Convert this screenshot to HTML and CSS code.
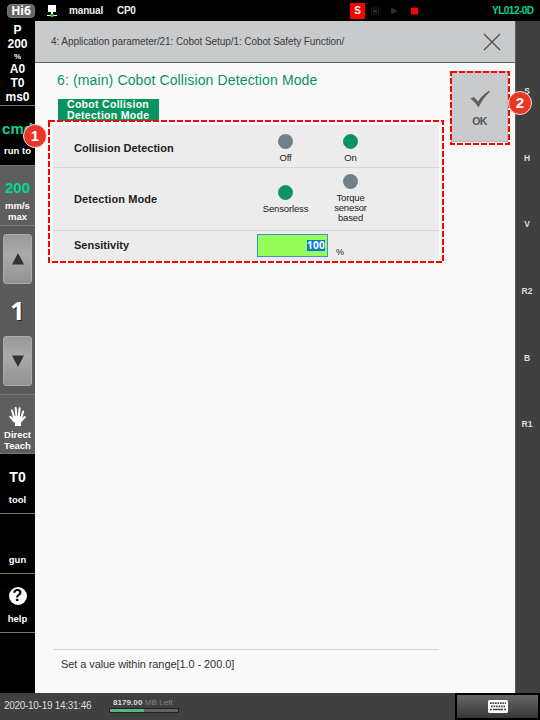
FILE: index.html
```html
<!DOCTYPE html>
<html lang="en">
<head>
<meta charset="utf-8">
<title>Cobot Collision Detection Mode</title>
<link rel="stylesheet" href="styles.css">
</head>
<body>
<div class="app">
  <header class="topbar">
    <span class="logo">Hi6</span>
    <svg class="net" width="10" height="12" viewBox="0 0 10 12"><path fill="#fff" d="M1 0h8v7H1zM4 7h2v3H4zM0 10h10v1H0z"/><path fill="#00e000" d="M3.500 9h3v3h-3z"/></svg>
    <b class="mode">manual</b><b class="cp">CP0</b>
    <span class="servo">S</span>
    <svg class="states" width="52" height="10" viewBox="0 0 52 10"><path fill="none" stroke="#142414" d="M.5 2h7v6h-7z"/><path fill="#203520" d="M2 3.5h4v3H2z"/><path fill="#303030" d="M20 1.500l7 3.500-7 3.500z"/><path fill="#f00" d="M40 1.500h7v7h-7z"/></svg>
    <b class="model">YL012-0D</b>
  </header>
  <div class="middle">
    <nav class="side">
      <section class="status"><b>P</b><b>200</b><small>%</small><b>A0</b><b>T0</b><b>ms0</b></section>
      <section class="cmd"><strong>cmd</strong><span>run to</span></section>
      <section class="speed"><strong>200</strong><span>mm/s<br>max</span></section>
      <section class="stepper">
        <button><svg width="12" height="12"><path fill="#333" d="M6 0l6 11.5H0z"/></svg></button>
        <strong>1</strong>
        <button><svg width="12" height="12"><path fill="#333" d="M0 .5h12L6 12z"/></svg></button>
      </section>
      <section class="teach">
        <svg width="17" height="19" viewBox="0 0 17 19"><path fill="none" stroke="#fff" stroke-width="2" stroke-linecap="round" d="M5.3 11L3 3.5M7.5 10L6.7 1M9.8 10L10.6 1.2M12 11.5l2.2-7M5 14L1.2 9.7M12 14l3.8-4"/><path fill="#fff" d="M4 9l9 .5c.8 3-.5 5-1 6.500V19H6v-3L3 12z"/></svg>
        <span>Direct<br>Teach</span>
      </section>
      <section class="tool"><strong>T0</strong><span>tool</span></section>
      <section class="gun"><span>gun</span></section>
      <section class="help"><i>?</i><span>help</span></section>
    </nav>
    <main class="page">
      <div class="crumbs"><span class="path">4: Application parameter/21: Cobot Setup/1: Cobot Safety Function/</span>
        <svg width="18" height="18"><path fill="none" stroke="#505050" stroke-width="1.4" d="M1 1l16 16M17 1L1 17"/></svg>
      </div>
      <div class="body">
        <h1><span>6: (main) Cobot Collision Detection Mode</span></h1>
        <div class="tab">Cobot Collision<br>Detection Mode</div>
        <div class="panel">
          <div class="row r1"><b>Collision Detection</b>
            <label class="opt"><i></i><span>Off</span></label><label class="opt"><i class="on"></i><span>On</span></label></div>
          <div class="row r2"><b>Detection Mode</b>
            <label class="opt"><i class="on"></i><span>Sensorless</span></label><label class="opt"><i></i><span>Torque<br>senesor<br>based</span></label></div>
          <div class="row r3"><b>Sensitivity</b><div class="field"><mark>100</mark></div><span class="unit">%</span></div>
          <svg class="callout" width="396" height="143"><rect x="1" y="1" width="394" height="141"/></svg>
          <em class="badge b1">1</em>
        </div>
        <p class="hint"><span>Set a value within range[1.0 - 200.0]</span></p>
      </div>
      <button class="ok">
        <svg width="20" height="18" viewBox="0 0 20 18"><path fill="#606060" d="M.5 8.500L4 7l4 4.500Q12 5 19.500.5l.3 1.500Q13 8 8.500 17.500 5 12 .5 8.500z"/></svg>
        <b>OK</b>
        <svg class="callout" width="60" height="74"><rect x="1" y="1" width="58" height="72"/></svg>
        <em class="badge b2">2</em>
      </button>
    </main>
    <aside class="axes"><b>S</b><b>H</b><b>V</b><b>R2</b><b>B</b><b>R1</b></aside>
  </div>
  <footer class="bottom">
    <span class="time">2020-10-19 14:31:46</span>
    <div class="memory"><div><b>8179.00</b> <span>MB Left</span></div><div class="bar"><i></i></div></div>
    <div class="keyboard"><svg width="20" height="13" viewBox="0 0 20 13"><rect width="20" height="13" rx="1.500" fill="#fff"/><path stroke="#444" stroke-width="1.700" stroke-dasharray="1.700 .8" d="M2 3.200h16M3 6.300h14"/><path stroke="#444" stroke-width="1.500" d="M2 9.500h2M5 9.500h10M16 9.500h2"/></svg></div>
  </footer>
</div>
</body>
</html>
```

FILE: styles.css
```css
* { box-sizing: border-box; }
body { margin: 0; width: 540px; height: 720px; overflow: hidden; font-family: "Liberation Sans", sans-serif; }
button { border: 0; padding: 0; font-family: inherit; }
i, em { font-style: normal; }
h1, p { margin: 0; }
.app { width: 540px; height: 720px; display: grid; grid-template-rows: 21px 672px 27px; background: #000; }
.topbar { display: flex; align-items: center; color: #eee; padding: 0 5px 0 7px; }
.logo { width: 28px; height: 14px; border-radius: 4px; background: #666; border: 1px solid #777; color: #fff; font: bold 12px/12px "Noto Sans", sans-serif; text-align: center; }
.net { margin-left: 12px; }
.mode { font-size: 10px; margin-left: 12px; width: 48px; letter-spacing: -.15px; }
.cp { font-size: 10px; letter-spacing: -.3px; }
.servo { width: 15px; height: 16px; margin-left: auto; background: #f00; color: #fff; font: bold 10px/16px "Liberation Sans", sans-serif; text-align: center; }
.states { margin: 0 69px 0 6px; }
.model { width: 43px; font-size: 10px; font-weight: bold; color: #00d98a; letter-spacing: -.5px; white-space: nowrap; }
.middle { display: grid; grid-template-columns: 35px 480px 25px; }
.side { display: grid; grid-template-rows: 85px 60px 60px 169px 59px 60px 60px 59px 60px; color: #fff; text-align: center; font-weight: bold; font-size: 9.500px; line-height: 11px; }
.side section { display: flex; flex-direction: column; align-items: center; border-bottom: 1px solid #777; white-space: nowrap; }
.side section:last-child { border-bottom: 1px solid #777; }
.status { font-size: 12px; line-height: 14px; padding-top: 2px; }
.status small { font-size: 8px; line-height: 11px; }
.cmd { padding-top: 14px; overflow: hidden; }
.cmd strong, .speed strong { font-size: 15px; line-height: 17px; color: #00d98a; }
.cmd span { margin-top: 8px; }
.speed { background: #5e5e5e; padding-top: 13px; }
.speed span { margin-top: 4px; }
.stepper { background: #5a5a5a; padding-top: 8px; }
.stepper button { width: 29px; height: 50px; border-radius: 3px; border: 1px solid #aaa; background: linear-gradient(#999, #aaa 40%, #929292); display: flex; align-items: center; justify-content: center; }
.stepper strong { font: bold 25px/52px "Noto Sans", sans-serif; text-shadow: 1px 1px #222; }
.side .teach { background: #5e5e5e; padding-top: 12px; }
.teach span { margin-top: 3px; }
.tool { padding-top: 15px; }
.tool strong { font-size: 14px; line-height: 16px; }
.tool span { margin-top: 9px; }
.gun { padding-top: 40px; }
.help { padding-top: 13px; }
.help i { width: 18px; height: 18px; border-radius: 50%; background: #fff; color: #000; font: bold 16px/18px "Liberation Sans", sans-serif; }
.help span { margin-top: 8px; }
.page { background: #f9f9f9; position: relative; }
.crumbs { height: 42px; display: flex; align-items: center; justify-content: space-between; padding: 0 14px 0 16px; background: #c8cacc; border-bottom: 1px solid #5c6464; font-size: 10px; color: #3c3c3c; }
.path { white-space: nowrap; letter-spacing: -.08px; }
.body { height: 630px; padding: 8px 76px 0 18px; display: flex; flex-direction: column; }
h1 { padding-left: 4px; font: 14px/18px "Liberation Sans", sans-serif; color: #08945e; white-space: nowrap; letter-spacing: .13px; }
.tab { width: 101px; height: 22px; margin: 10px 0 0 5px; padding-left: 9px; background: #08945e; color: #fff; font-weight: bold; font-size: 10.500px; line-height: 11px; letter-spacing: .3px; white-space: nowrap; }
.panel { margin-top: 4px; height: 136px; position: relative; background: #ececec; }
.row { display: flex; padding-left: 21px; border-bottom: 1px solid #d6d6d6; color: #222; }
.row b { width: 179px; font-size: 11px; }
.r1 { height: 43px; }
.r1 b, .r2 b { align-self: center; }
.r1 b { padding-top: 3px; }
.r2 b { letter-spacing: .1px; }
.r3 { height: 30px; border: 0; }
.r2 { height: 63px; }
.opt { width: 65px; display: flex; flex-direction: column; align-items: center; font-size: 9.500px; line-height: 10px; text-align: center; letter-spacing: -.15px; }
.r1 .opt { padding-top: 9px; }
.r1 .opt span { margin-top: 4px; }
.r2 .opt:nth-of-type(1) { padding-top: 17px; }
.r2 .opt:nth-of-type(2) { padding-top: 6px; }
.r2 .opt span { margin-top: 4px; }
.opt i { width: 15px; height: 15px; border-radius: 50%; background: #70808a; }
.opt i.on { background: #08945e; border: 1px solid #29819c; }
.r3 b { width: 183px; line-height: 28px; }
.field { width: 71px; height: 23px; margin-top: 3px; background: #93ff58; border: 1px solid #3c91cf; display: flex; justify-content: flex-end; align-items: center; padding-right: 2px; }
mark { background: #0878d8; color: #fff; font: bold 10px/11px "Noto Sans", sans-serif; letter-spacing: .3px; }
.unit { font-size: 9px; margin: 16px 0 0 8px; line-height: 10px; }
.callout { position: absolute; top: -5px; left: -5px; overflow: visible; }
.callout rect { fill: none; stroke: #f00; stroke-width: 2; stroke-dasharray: 6 2; }
.badge { position: absolute; width: 24px; height: 24px; border-radius: 50%; border: 1px solid #f8dcd9; background: #e93727; color: #fff; font: bold 15px/22px "Liberation Sans", sans-serif; text-align: center; }
.b1 { left: -30px; top: -1px; }
.hint { margin: 388px 0 0; height: 30px; border-top: 1px solid #d6d6d6; padding: 7px 0 0 8px; font-size: 11px; line-height: 14px; color: #333; white-space: nowrap; letter-spacing: -.08px; }
.ok { position: absolute; left: 416px; top: 50px; width: 57px; height: 71px; background: #c8cacc; display: flex; flex-direction: column; align-items: center; padding-top: 18px; border: 1px solid #b5b7b8; }
.ok b { margin-top: 7px; font-size: 10.500px; line-height: 12px; color: #555; letter-spacing: -.7px; }
.ok .callout { top: -1px; left: -2px; }
.b2 { left: 56px; top: 19px; }
.axes { background: #404040; border-left: 1px solid #50616a; color: #ddd; display: flex; flex-direction: column; align-items: center; font-size: 8.500px; padding: 37px 2px 0 0; }
.axes b { height: 66.700px; line-height: 66px; }
.bottom { background: #404040; display: flex; color: #ddd; }
.time { width: 109px; padding-left: 4px; font-size: 10px; line-height: 26px; white-space: nowrap; letter-spacing: -.3px; }
.memory { width: 70px; padding-top: 5px; font-size: 8px; line-height: 9px; white-space: nowrap; }
.memory > div:first-child { padding-left: 4px; letter-spacing: .07px; }
.memory span { color: #808080; }
.bar { height: 5px; margin-top: 1px; border: 1px solid #222; background: #626262; }
.bar i { display: block; width: 34px; height: 3px; background: #53b880; }
.keyboard { margin-left: auto; width: 85px; height: 27px; border: 2px solid #000; background: linear-gradient(#666, #383838); display: flex; align-items: center; justify-content: center; }
```
